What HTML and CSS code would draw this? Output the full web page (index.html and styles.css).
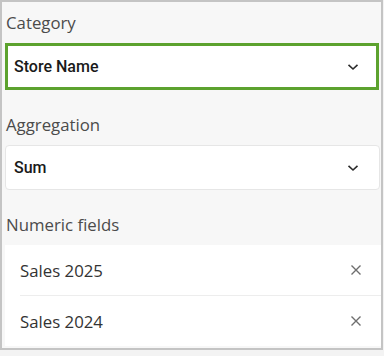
FILE: index.html
```html
<!DOCTYPE html>
<html>
<head>
<meta charset="utf-8">
<link rel="stylesheet" href="styles.css">
</head>
<body>
<div class="frame">
  <div class="group first">
    <div class="label">Category</div>
    <div class="select focused">
      <span class="value">Store Name</span>
      <svg class="chev" width="12" height="8" viewBox="0 0 12 8"><path d="M1.5 1.8 L6 6 L10.5 1.8" fill="none" stroke="#2b2b2b" stroke-width="1.6"/></svg>
    </div>
  </div>
  <div class="group">
    <div class="label">Aggregation</div>
    <div class="select plain">
      <span class="value">Sum</span>
      <svg class="chev" width="12" height="8" viewBox="0 0 12 8"><path d="M1.5 1.8 L6 6 L10.5 1.8" fill="none" stroke="#2b2b2b" stroke-width="1.6"/></svg>
    </div>
  </div>
  <div class="group">
    <div class="label">Numeric fields</div>
    <div class="list">
      <div class="item">
        <span class="name">Sales 2025</span>
        <svg class="x" width="12" height="12" viewBox="0 0 12 12"><path d="M1.5 1.5 L10.5 10.5 M10.5 1.5 L1.5 10.5" fill="none" stroke="#6e6e6e" stroke-width="1.4"/></svg>
      </div>
      <div class="item last">
        <span class="name">Sales 2024</span>
        <svg class="x" width="12" height="12" viewBox="0 0 12 12"><path d="M1.5 1.5 L10.5 10.5 M10.5 1.5 L1.5 10.5" fill="none" stroke="#6e6e6e" stroke-width="1.4"/></svg>
      </div>
    </div>
  </div>
</div>
</body>
</html>
```
FILE: styles.css
```css
html, body {
  margin: 0;
  padding: 0;
  background: #f3f3f3;
}
.frame {
  box-sizing: border-box;
  width: 383px;
  height: 350px;
  border: 2px solid #c4c4c4;
  background: #f7f7f7;
  padding: 10px 2px 0 3px;
  display: flex;
  flex-direction: column;
  font-family: "Open Sans", "Liberation Sans", sans-serif;
}
.group {
  display: flex;
  flex-direction: column;
  margin-top: 24px;
}
.group.first {
  margin-top: 0;
}
.label {
  font-size: 16.8px;
  line-height: 22px;
  height: 22px;
  color: #4b4b4b;
  padding-left: 1px;
  margin-bottom: 9px;
}
.select {
  box-sizing: border-box;
  display: flex;
  align-items: center;
  justify-content: space-between;
  background: #ffffff;
  border: 1px solid #e6e6e6;
  border-radius: 4px;
  padding: 0 19px 0 8px;
}
.select.focused {
  height: 47px;
  border-color: #5ca22e;
  border-radius: 0;
  box-shadow: inset 0 0 0 2px #5ca22e;
}
.select.plain {
  height: 45px;
  margin-right: -1px;
  padding-right: 20px;
}
.value {
  font-family: Roboto, "Noto Sans", sans-serif;
  font-weight: 500;
  font-size: 16px;
  color: #1a1a1a;
}
.chev {
  display: block;
}
.list {
  display: flex;
  flex-direction: column;
  background: #ffffff;
  margin-right: -2px;
}
.item {
  display: flex;
  align-items: center;
  justify-content: space-between;
  height: 51px;
  margin-left: 15px;
  padding: 0 19px 0 0;
  border-bottom: 1px solid #ededed;
  box-sizing: border-box;
}
.item.last {
  border-bottom: none;
  height: 50px;
}
.name {
  font-size: 16.8px;
  color: #333333;
}
.x {
  display: block;
}
```
